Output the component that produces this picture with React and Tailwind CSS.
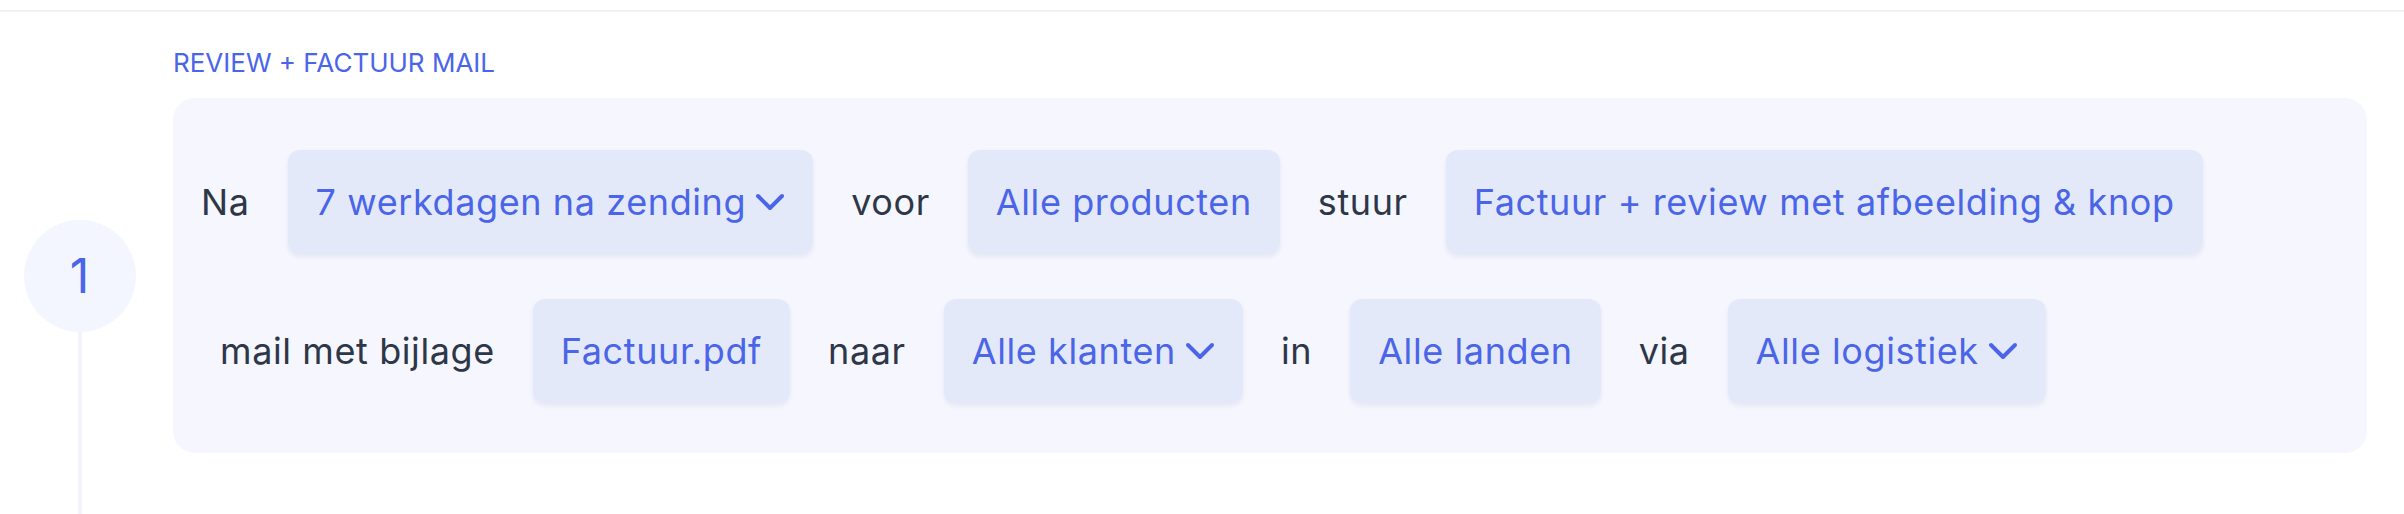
import { ChevronDown } from 'lucide-react'

const ROWS = [
  [
    { text: 'Na' },
    { pill: '7 werkdagen na zending', dropdown: true },
    { text: 'voor' },
    { pill: 'Alle producten' },
    { text: 'stuur' },
    { pill: 'Factuur + review met afbeelding & knop' },
  ],
  [
    { text: 'mail met bijlage' },
    { pill: 'Factuur.pdf' },
    { text: 'naar' },
    { pill: 'Alle klanten', dropdown: true },
    { text: 'in' },
    { pill: 'Alle landen' },
    { text: 'via' },
    { pill: 'Alle logistiek', dropdown: true },
  ],
]

function Pill({ label, dropdown }) {
  return (
    <button
      className={`flex items-center rounded-[12px] bg-[#e4e9fa] py-[25px] pl-[28px] text-[36px] leading-[54px] tracking-[0.6px] text-[#4a65e8] shadow-[0_3px_5px_rgba(30,40,90,0.07)] ${
        dropdown ? 'pr-[19px]' : 'pr-[28px]'
      }`}
    >
      <span>{label}</span>
      {dropdown && <ChevronDown size={48} strokeWidth={2} className="shrink-0" />}
    </button>
  )
}

export default function App() {
  return (
    <div className="min-h-[514px] bg-white pt-[10px] font-['Inter','Liberation_Sans',sans-serif]">
      <div className="flex border-t-2 border-[#f2f2f2]">
        {/* Step marker */}
        <div className="flex w-[159px] shrink-0 flex-col items-center pt-[208px]">
          <div className="flex h-[112px] w-[112px] items-center justify-center rounded-full bg-[#f4f6ff] text-[48px] leading-none text-[#4a65e8]">
            1
          </div>
          <div className="w-[4px] flex-1 bg-[#f2f4fd]" />
        </div>

        {/* Rule */}
        <div className="ml-[14px] flex-1 pr-[37px] pt-[33px] pb-[61px]">
          <h3 className="mb-[17px] text-[26px] leading-[36px] font-normal uppercase text-[#4a65e8]">
            Review + Factuur mail
          </h3>
          <div className="flex h-[355px] flex-col gap-[45px] rounded-[22px] bg-[#f5f6fe] pt-[52px] pl-[28px]">
            {ROWS.map((row, i) => (
              <div key={i} className={`flex items-center gap-[38px] ${i === 1 ? 'pl-[19px]' : ''}`}>
                {row.map((item, j) =>
                  item.pill ? (
                    <Pill key={j} label={item.pill} dropdown={item.dropdown} />
                  ) : (
                    <span key={j} className="text-[36px] leading-[54px] tracking-[0.6px] text-[#2d3748]">
                      {item.text}
                    </span>
                  )
                )}
              </div>
            ))}
          </div>
        </div>
      </div>
    </div>
  )
}
